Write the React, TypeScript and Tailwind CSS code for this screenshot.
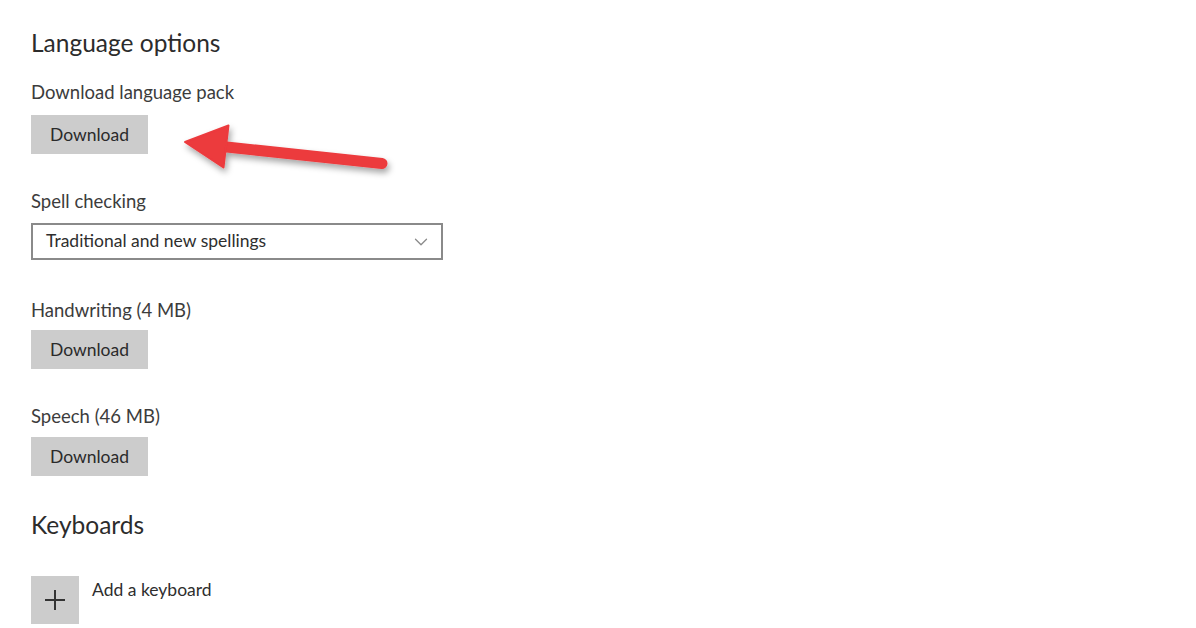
import { ChevronDown } from "lucide-react";

const font = { fontFamily: '"Lato", "Open Sans", sans-serif' };

function GrayButton({ label }: { label: string }) {
  return (
    <button className="w-[117px] h-[39px] bg-[#cccccc] text-[#2a2a2a] text-[17.5px] leading-none">
      {label}
    </button>
  );
}

function Label({ text }: { text: string }) {
  return <div className="text-[18.5px] leading-[24px] text-[#3c3c3c]">{text}</div>;
}

export default function App() {
  return (
    <div className="relative w-[1196px] h-[628px] bg-white overflow-hidden" style={font}>
      <div className="pl-[31px] pt-[28px] flex flex-col">
        <h2 className="text-[24.5px] leading-[30px] text-[#2c2c2c]">Language options</h2>

        <div className="mt-[22px]">
          <Label text="Download language pack" />
        </div>
        <div className="mt-[11px]">
          <GrayButton label="Download" />
        </div>

        <div className="mt-[35px]">
          <Label text="Spell checking" />
        </div>
        <div className="mt-[10px] w-[412px] h-[37px] border-2 border-[#8a8a8a] flex items-center justify-between pl-[13px] pr-[9px]">
          <span className="text-[17.5px] text-[#2e2e2e]">Traditional and new spellings</span>
          <ChevronDown className="w-[22px] h-[22px] text-[#8a8a8a]" strokeWidth={1.4} />
        </div>

        <div className="mt-[38px]">
          <Label text="Handwriting (4 MB)" />
        </div>
        <div className="mt-[8px]">
          <GrayButton label="Download" />
        </div>

        <div className="mt-[35px]">
          <Label text="Speech (46 MB)" />
        </div>
        <div className="mt-[9px]">
          <GrayButton label="Download" />
        </div>

        <h2 className="mt-[34px] text-[24.5px] leading-[30px] text-[#2c2c2c]">Keyboards</h2>

        <div className="mt-[36px] flex items-start gap-[13px]">
          <div className="w-[48px] h-[48px] bg-[#cccccc] flex items-center justify-center">
            <svg width="22" height="22" viewBox="0 0 22 22">
              <path d="M11 1V21M1 11H21" stroke="#333" strokeWidth="2" />
            </svg>
          </div>
          <span className="mt-[2px] text-[17.5px] leading-[24px] text-[#2e2e2e]">Add a keyboard</span>
        </div>
      </div>

      <svg
        className="absolute left-0 top-0 pointer-events-none"
        width="1196"
        height="628"
        viewBox="0 0 1196 628"
      >
        <defs>
          <filter id="arrowShadow" x="-20%" y="-50%" width="140%" height="200%">
            <feDropShadow dx="2" dy="4" stdDeviation="3" floodColor="#000" floodOpacity="0.35" />
          </filter>
        </defs>
        <g filter="url(#arrowShadow)" fill="#ec3a3e" stroke="#ec3a3e">
          <line x1="222" y1="146.5" x2="382" y2="163.5" strokeWidth="11" strokeLinecap="round" />
          <polygon points="185,142 228.5,125.5 223.5,167.5" strokeWidth="2" strokeLinejoin="round" />
        </g>
      </svg>
    </div>
  );
}
